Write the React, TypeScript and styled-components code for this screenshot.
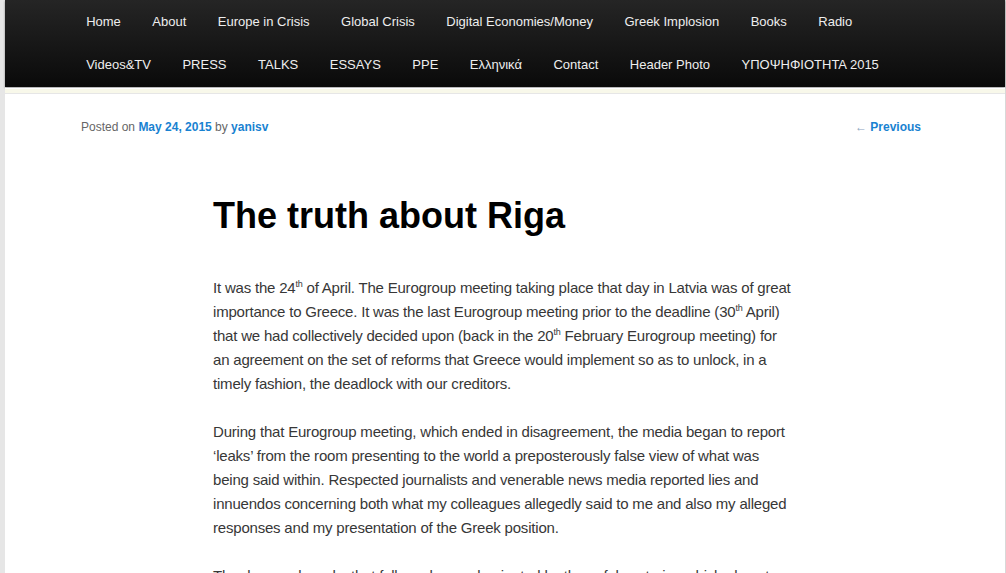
import styled, {createGlobalStyle} from "styled-components";

const menuRows = [
  ["Home", "About", "Europe in Crisis", "Global Crisis", "Digital Economies/Money", "Greek Implosion", "Books", "Radio"],
  ["Videos&TV", "PRESS", "TALKS", "ESSAYS", "PPE", "Ελληνικά", "Contact", "Header Photo", "ΥΠΟΨΗΦΙΟΤΗΤΑ 2015"],
];

export default function App() {
  return (
    <>
      <Global/>
      <Page>
        <Access>
          <MenuList>
            {menuRows.flat().map((item) => (
              <MenuItem key={item}><MenuLink href="#">{item}</MenuLink></MenuItem>
            ))}
          </MenuList>
        </Access>
        <Divider/>
        <Main>
          <EntryMeta>
            <span>
              Posted on <MetaLink href="#">May 24, 2015</MetaLink> by <MetaLink href="#">yanisv</MetaLink>
            </span>
            <NavSingle href="#"><Arrow>←</Arrow> Previous</NavSingle>
          </EntryMeta>
          <Entry>
            <Title>The truth about Riga</Title>
            <Para>
              It was the 24<sup>th</sup> of April. The Eurogroup meeting taking place that day in Latvia was of great<br/>
              importance to Greece. It was the last Eurogroup meeting prior to the deadline (30<sup>th</sup> April)<br/>
              that we had collectively decided upon (back in the 20<sup>th</sup> February Eurogroup meeting) for<br/>
              an agreement on the set of reforms that Greece would implement so as to unlock, in a<br/>
              timely fashion, the deadlock with our creditors.
            </Para>
            <Para>
              During that Eurogroup meeting, which ended in disagreement, the media began to report<br/>
              ‘leaks’ from the room presenting to the world a preposterously false view of what was<br/>
              being said within. Respected journalists and venerable news media reported lies and<br/>
              innuendos concerning both what my colleagues allegedly said to me and also my alleged<br/>
              responses and my presentation of the Greek position.
            </Para>
            <Para>
              The days and weeks that followed were dominated by these false stories which almost<br/>
              succeeded in creating the impression that Greece was isolated and that the negotiations<br/>
              had reached an impasse.
            </Para>
          </Entry>
        </Main>
      </Page>
    </>
  );
}

const Global = createGlobalStyle`
  html, body {
    margin: 0;
    padding: 0;
    background: #e6e6e6;
    overflow: hidden;
  }
  body {
    font-family: "Liberation Sans", Arial, Helvetica, sans-serif;
  }
`;

const Page = styled.div`
  width: 1000px;
  margin: 0 0 0 5px;
  background: #fff;
  min-height: 573px;
  border-right: 1px solid #d8d8d8;
`;

const Access = styled.nav`
  background: linear-gradient(#252525, #0a0a0a);
  box-shadow: rgba(0, 0, 0, 0.4) 0 1px 2px;
  padding: 0 76px;
  font-size: 13px;
`;

const MenuList = styled.ul`
  list-style: none;
  margin: 0 0 0 -10.6px;
  padding: 0;
  display: flex;
  flex-wrap: wrap;
`;

const MenuItem = styled.li`
  display: block;
`;

const MenuLink = styled.a`
  display: block;
  color: #eee;
  text-decoration: none;
  line-height: 43.3px;
  padding: 0 15.76px;
`;

const Divider = styled.div`
  height: 4px;
  margin-top: 1px;
  border-top: 1px solid #fff;
  border-bottom: 1px solid #e6e6e6;
  background: #f8f8ea;
`;

const Main = styled.div`
  padding: 24px 76px 0;
`;

const EntryMeta = styled.div`
  display: flex;
  justify-content: space-between;
  align-items: center;
  font-size: 12px;
  line-height: 18px;
  color: #666;
`;

const MetaLink = styled.a`
  color: #1982d1;
  font-weight: bold;
  text-decoration: none;
`;

const NavSingle = styled.a`
  color: #1982d1;
  font-weight: bold;
  text-decoration: none;
  padding-right: 8px;
`;

const Arrow = styled.span`
  color: #8aa4c0;
  font-weight: normal;
`;

const Entry = styled.article`
  width: 584px;
  margin: 56px auto 0;
`;

const Title = styled.h1`
  margin: 0 0 36px;
  font-size: 36px;
  line-height: 48px;
  font-weight: bold;
  color: #000;
`;

const Para = styled.p`
  margin: 0 0 24px;
  font-size: 15px;
  line-height: 24px;
  letter-spacing: -0.2px;
  white-space: nowrap;
  color: #373737;

  sup {
    font-size: 9px;
    line-height: 0;
    vertical-align: 6px;
  }
`;
